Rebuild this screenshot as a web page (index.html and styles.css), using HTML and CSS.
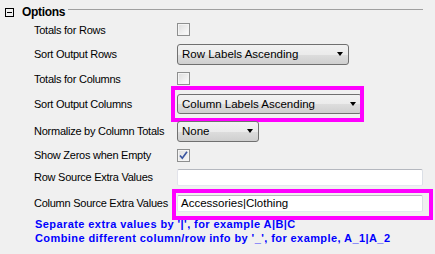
FILE: index.html
```html
<!DOCTYPE html>
<html>
<head>
<meta charset="utf-8">
<link rel="stylesheet" href="styles.css">
</head>
<body>
<div class="panel">
  <div class="header">
    <span class="toggle"><span class="minus"></span></span>
    <span class="title">Options</span>
    <span class="rule"></span>
  </div>
  <div class="rows">
    <div class="label">Totals for Rows</div>
    <div class="ctl"><span class="check"></span></div>

    <div class="label">Sort Output Rows</div>
    <div class="ctl"><div class="combo w1"><span class="val">Row Labels Ascending</span><span class="arrow"></span></div></div>

    <div class="label">Totals for Columns</div>
    <div class="ctl"><span class="check"></span></div>

    <div class="label">Sort Output Columns</div>
    <div class="ctl"><div class="combo w2"><span class="val">Column Labels Ascending</span><span class="arrow"></span><span class="hl hl1"></span></div></div>

    <div class="label">Normalize by Column Totals</div>
    <div class="ctl"><div class="combo w3"><span class="val">None</span><span class="arrow"></span></div></div>

    <div class="label">Show Zeros when Empty</div>
    <div class="ctl"><span class="check checked"><svg width="11" height="11" viewBox="0 0 11 11"><path d="M2 5.5 L4.3 8.2 L9 1.8" fill="none" stroke="#3a55a0" stroke-width="1.7"/></svg></span></div>

    <div class="label">Row Source Extra Values</div>
    <div class="ctl"><div class="text"></div></div>

    <div class="label">Column Source Extra Values</div>
    <div class="ctl"><div class="text">Accessories|Clothing<span class="hl hl2"></span></div></div>
  </div>
  <div class="notes">
    <div>Separate extra values by '|', for example A|B|C</div>
    <div>Combine different column/row info by '_', for example, A_1|A_2</div>
  </div>
</div>
</body>
</html>
```
FILE: styles.css
```css
html, body {
  margin: 0;
  padding: 0;
  background: #f0f0f0;
}
body {
  font-family: "Liberation Sans", Arial, sans-serif;
  font-size: 11px;
  color: #000;
  width: 435px;
  height: 254px;
  overflow: hidden;
}
.header {
  display: flex;
  align-items: flex-start;
  height: 18px;
  padding: 6px 12px 0 5px;
  box-sizing: border-box;
}
.toggle {
  width: 9px;
  height: 9px;
  border: 1px solid #000;
  box-sizing: border-box;
  margin-top: 2px;
  display: flex;
  align-items: center;
  justify-content: center;
}
.minus {
  width: 5px;
  height: 1px;
  background: #000;
}
.title {
  font-weight: bold;
  font-size: 12px;
  line-height: 12px;
  margin-left: 8px;
  letter-spacing: -0.3px;
}
.rule {
  flex: 1;
  height: 1px;
  background: #a0a0a0;
  margin-top: 3px;
  margin-left: 3px;
}
.rows {
  display: grid;
  grid-template-columns: 143px 1fr;
  grid-template-rows: 23px 26px 23px 27px 28px 20px 24px 28px;
  padding-left: 34px;
  align-items: center;
}
.label {
  white-space: nowrap;
  font-size: 11px;
  letter-spacing: -0.25px;
}
.ctl {
  display: flex;
  align-items: center;
}
.check {
  width: 13px;
  height: 13px;
  box-sizing: border-box;
  border: 1px solid #8e8f8f;
  background: linear-gradient(135deg, #dcdcdc 0%, #f4f4f4 70%, #fcfcfc 100%);
  box-shadow: inset 0 0 0 1px #f4f4f4;
  display: flex;
  align-items: center;
  justify-content: center;
}
.check.checked {
  background: linear-gradient(135deg, #e0e0e0 0%, #f6f6f6 100%);
}
.combo {
  position: relative;
  height: 21px;
  box-sizing: border-box;
  border: 1px solid #707070;
  border-radius: 3px;
  background: linear-gradient(to bottom, #f2f2f2 0%, #ebebeb 50%, #dddddd 51%, #cfcfcf 100%);
  display: flex;
  align-items: center;
  padding-left: 4px;
  font-size: 11.5px;
}
.combo.w1 { width: 172px; }
.combo.w2 { width: 185px; height: 20px; }
.combo.w3 { width: 82px; }
.val { flex: 1; white-space: nowrap; }
.arrow {
  width: 0;
  height: 0;
  border-left: 3.5px solid transparent;
  border-right: 3.5px solid transparent;
  border-top: 4px solid #000;
  margin-right: 5px;
}
.text {
  position: relative;
  width: 246px;
  height: 17px;
  box-sizing: border-box;
  border: 1px solid;
  border-color: #b5b8bf #dbdfe6 #e3e9ef #e2e3ea;
  border-radius: 2px;
  background: #fff;
  padding-left: 3px;
  line-height: 15px;
  font-size: 11.5px;
}
.hl {
  position: absolute;
  box-sizing: border-box;
  border: 4px solid #ff00ff;
  pointer-events: none;
}
.hl1 {
  left: -7px;
  top: -9px;
  width: 193px;
  height: 36px;
}
.hl2 {
  left: -6px;
  top: -7px;
  width: 261px;
  height: 31px;
}
.notes {
  padding-left: 35px;
  color: #0000ff;
  font-weight: bold;
  font-size: 11px;
  letter-spacing: 0.42px;
  line-height: 14px;
  white-space: nowrap;
}
```
